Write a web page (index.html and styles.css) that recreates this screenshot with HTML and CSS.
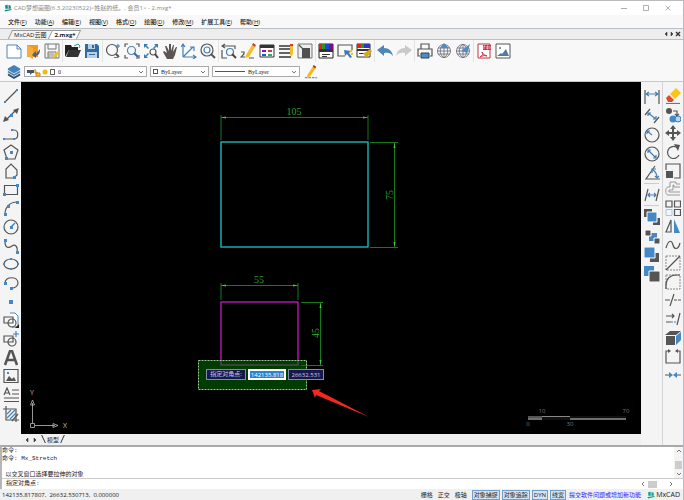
FILE: index.html
```html
<!doctype html>
<html lang="zh-CN">
<head>
	<meta charset="utf-8">
	<title>CAD梦想画图</title>
	<link rel="stylesheet" href="styles.css">
</head>
<body>
<div class="window">
	<header class="titlebar">
		<svg class="logo" viewBox="0 0 16 16"><path d="M2 3l5-2 1 8-5 1zM9 2l4 1 1 6-5 1zM1 12l14-2v2L2 15z" fill="#168b86"/></svg>
		<span class="title">CAD梦想画图(6.3.20230522)&lt;姓赵的纸。, 会员1&gt; - 2.mxg*</span>
		<button class="winbtn" aria-label="最小化"><svg viewBox="0 0 8 8"><path d="M1 4.500h6"/></svg></button>
		<button class="winbtn" aria-label="最大化"><svg viewBox="0 0 8 8"><path d="M1.500 1.500h5v5h-5z"/></svg></button>
		<button class="winbtn" aria-label="关闭"><svg viewBox="0 0 8 8"><path d="M1.500 1.500l5 5m0-5l-5 5"/></svg></button>
	</header>

	<nav class="menu">
		<button>文件(<u>F</u>)</button>
		<button>功能(<u>A</u>)</button>
		<button>编辑(<u>E</u>)</button>
		<button>视图(<u>V</u>)</button>
		<button>格式(<u>O</u>)</button>
		<button>绘图(<u>D</u>)</button>
		<button>修改(<u>M</u>)</button>
		<button>扩展工具(<u>E</u>)</button>
		<button>帮助(<u>H</u>)</button>
	</nav>

	<div class="tabs">
		<button class="tab">MxCAD云图</button>
		<button class="tab active">2.mxg*</button>
		<div class="tabnav">
			<button aria-label="上一个"><svg viewBox="0 0 6 6"><path d="M4 1L2 3l2 2z"/></svg></button>
			<button aria-label="下一个"><svg viewBox="0 0 6 6"><path d="M2 1l2 2-2 2z"/></svg></button>
			<button aria-label="关闭标签"><svg viewBox="0 0 6 6"><path d="M1 1l4 4m0-4L1 5" stroke-width="1.400"/></svg></button>
		</div>
	</div>

	<div class="toolbar">
		<div class="group">
			<button aria-label="新建"><svg viewBox="0 0 16 16"><path d="M1 2h10l4 4v9H1zM11 2v4h4" fill="#fff" stroke="#5585b5"/></svg></button>
			<button aria-label="打开云图"><svg viewBox="0 0 16 16"><path d="M2 2h11v12H2z" fill="#ef9a27"/><path d="M2 2l6 3v11l-6-3z" fill="#f7ad3b"/><path d="M15 6l-4 5V8L7 12l4 3v-2c3-1 4-3 4-7z" fill="#535c80"/></svg></button>
			<button aria-label="保存到云"><svg viewBox="0 0 16 16"><path d="M1 1h14v14H1zM4 1v5h8V1M4 15V9h8v6" fill="#f4f4f4" stroke="#777"/><path d="M4 11h6M4 13h5" stroke="#888"/><path d="M8 13l6-5 2 2-6 5z" fill="#efc131"/></svg></button>
		</div>
		<div class="group">
			<button aria-label="打开"><svg viewBox="0 0 16 16"><path d="M0 14V2h6l1 2h6v3H4z" fill="#222"/><path d="M4 7h12l-3 7H1z" fill="#333"/><path d="M9 3l4-2 2 2-1 2" fill="none" stroke="#388f6d"/></svg></button>
			<button aria-label="保存"><svg viewBox="0 0 16 16"><path d="M1 1h12l2 2v12H1z" fill="#346b9f"/><path d="M4 1h7v5H4zM3 9h10v6H3z" fill="#b7d1e7"/><path d="M8 2h2v3H8zM5 11h6v1H5z" fill="#346b9f"/></svg></button>
		</div>
		<div class="group">
			<button aria-label="实时缩放"><svg viewBox="0 0 16 16"><circle cx="7" cy="7" r="5.500" class="ln"/><path d="M11 11l3 3" stroke="#555" stroke-width="2"/><path d="M13 1v4M11 3h4M9 14.500h4" class="bl"/></svg></button>
			<button aria-label="范围缩放"><svg viewBox="0 0 16 16"><path d="M1 4V1h3M12 1h3v3M1 12v3h3M12 15h3v-3" class="ln"/><circle cx="7.500" cy="7.500" r="4" class="bl"/><path d="M10 10l4 4" stroke="#346b9f" stroke-width="2"/></svg></button>
			<button aria-label="全图"><svg viewBox="0 0 16 16"><path d="M1 5V1h4L3.500 2.500 6 5 5 6 2.500 3.500zM15 5V1h-4l1.500 1.500L10 5l1 1 2.500-2.500zM1 11v4h4l-1.500-1.500L6 11l-1-1-2.500 2.500z" fill="#3b7bb5"/><circle cx="10" cy="9" r="3" class="ln"/><path d="M12 11l3 4" stroke="#444" stroke-width="2"/></svg></button>
			<button aria-label="平移"><svg viewBox="0 0 16 16"><path d="M5 16L1 9l1-1 3 2L3 3h1.500L7 8V1h2v7l2-6h1l-1 7 3-5h1l-2 8-2 4z" fill="#5c5553"/></svg></button>
			<button aria-label="坐标系"><svg viewBox="0 0 16 16"><path d="M2 14V2M0 4l2-3 2 3M2 14h12M12 12l3 2-3 2M2 14L12 4M9 4h4v4" class="bl"/></svg></button>
			<button aria-label="缩放对象"><svg viewBox="0 0 16 16"><circle cx="7" cy="7" r="6" class="ln"/><circle cx="7" cy="7" r="3" class="bl"/><path d="M11 11l4 4" stroke="#555" stroke-width="2"/></svg></button>
		</div>
		<div class="group">
			<button aria-label="窗口缩放"><svg viewBox="0 0 16 16"><path d="M1 7v8h5M1 3h13v3M4 1L1 3l3 2" class="ln"/><circle cx="9" cy="9" r="3.500" class="bl"/><path d="M11 11l4 4" stroke="#444" stroke-width="2"/></svg></button>
			<button aria-label="编辑"><svg viewBox="0 0 16 16"><path d="M6 12L12 2l3 2-6 10-4 1z" fill="#f4be27"/><path d="M12 2l1-2 3 2-1 2z" fill="#c9422d"/><path d="M1 9h3v2l-3 3h4M9 15h5" class="ln"/></svg></button>
			<button aria-label="图层表"><svg viewBox="0 0 16 16"><path d="M1 2h14v12H1z" fill="#fff" stroke="#333"/><path d="M1 2h14v3H1z" fill="#333"/><path d="M3 7h4v2H3z" fill="#a0c"/><path d="M3 11h4v2H3z" fill="#06c"/><path d="M9 7h4v2H9z" fill="#d33"/><path d="M9 11h4v2H9z" fill="#2a7"/></svg></button>
			<button aria-label="线型"><svg viewBox="0 0 16 16"><path d="M1 3h11M1 6h11M1 10h11M1 14h12" stroke="#333" stroke-width="1.500"/><path d="M12 2h3v9l-2 3-1-3z" fill="#efbd30"/><path d="M12 1h3v2h-3z" fill="#d33"/></svg></button>
			<button aria-label="块"><svg viewBox="0 0 16 16"><path d="M1 1h14v14H1z" fill="#eee" stroke="#777"/><path d="M5 5h8v10H5z" fill="#505050"/><path d="M2 2l4 4" class="ln"/></svg></button>
		</div>
		<div class="group">
			<button aria-label="颜色"><svg viewBox="0 0 16 16"><path d="M1 1h14v14H1z" fill="#fff" stroke="#222"/><path d="M1 1h3v5H1z" fill="#d22"/><path d="M4 1h3v5H4z" fill="#292"/><path d="M7 1h4v5H7z" fill="#24d"/><path d="M11 1h4v5h-4z" fill="#718"/><path d="M1 6h14v3H1zM4 11h8v1H4zM4 13h5v1H4z" fill="#333"/></svg></button>
			<button aria-label="选择"><svg viewBox="0 0 16 16"><path d="M15 7V2H1v11h7" class="ln"/><path d="M7 7l7 1-2 2 3 4-2 1-3-4-2 2z" fill="#3b7bb5"/><path d="M13 9l2-2M14 11h2" stroke="#efbd30" stroke-width="2"/></svg></button>
			<button aria-label="格式刷"><svg viewBox="0 0 16 16"><path d="M1 1h13v13H1z" fill="#fff" stroke="#333"/><path d="M1 1h4v4H1z" fill="#d22"/><path d="M5 1h3v4H5z" fill="#292"/><path d="M8 1h6v4H8z" fill="#33c"/><path d="M1 6h13v2H1zM3 10h5v1H3z" fill="#333"/><path d="M7 10l3-1 4-3 2 2-3 4-3 3z" fill="#d7a71d"/></svg></button>
		</div>
		<div class="group">
			<button aria-label="撤销"><svg viewBox="0 0 16 16"><path d="M0 7l7-5v3c5 0 8 3 9 8-2-3-5-4-9-3v3z" fill="#4d86b7"/></svg></button>
			<button aria-label="重做"><svg viewBox="0 0 16 16"><path d="M16 7L9 2v3c-5 0-8 3-9 8 2-3 5-4 9-3v3z" fill="#c9c9c9"/></svg></button>
		</div>
		<div class="group">
			<button aria-label="打印"><svg viewBox="0 0 16 16"><path d="M4 6V1h8v5M3 13H1V6h14v7h-2" class="ln"/><path d="M4 10h8v5H4z" fill="#4e8dc4" stroke="#345"/></svg></button>
			<button aria-label="发布"><svg viewBox="0 0 16 16"><circle cx="8" cy="8" r="6.500" class="thin"/><path d="M2 5h12M1 8h14M2 11h12M8 1v14M8 1c-5 4-5 10 0 14M8 1c5 4 5 10 0 14" class="thin"/><path d="M4 5l4-5 5 5z" fill="#4e8dc4"/></svg></button>
			<button aria-label="网页"><svg viewBox="0 0 16 16"><circle cx="8" cy="8" r="6.500" class="thin"/><path d="M2 5h12M1 8h14M2 11h12M8 1v14M8 1c-5 4-5 10 0 14M8 1c5 4 5 10 0 14" class="thin"/><path d="M6 8l9-7-3 10-2-2z" fill="#4e8dc4"/></svg></button>
		</div>
		<div class="group">
			<button aria-label="输出PDF"><svg viewBox="0 0 16 16"><path d="M2 1h12v14H2z" fill="#fff" stroke="#bf3445"/><path d="M7 2h8v5H7z" fill="#d32e45"/><path d="M8 3v3m0-3h1v1M11 3v3h1V3zM14 3v3" stroke="#fff" stroke-width=".6" fill="none"/><path d="M4 14c3-2 3-3 2-5 1 3 3 3 5 4-3-1-5 0-7 1z" stroke="#c9314b" fill="none"/></svg></button>
			<button aria-label="输出图片"><svg viewBox="0 0 16 16"><path d="M1 1h14v14H1z" fill="#fff" stroke="#555"/><path d="M2 13l4-3 1 1 4-5 3 7z" fill="#4c7ca6"/><circle cx="5" cy="5" r="1" fill="#4c7ca6"/></svg></button>
		</div>
	</div>

	<div class="props">
		<button class="layers" aria-label="图层"><svg viewBox="0 0 16 16"><path d="M1 10l7-3 7 3v2l-7 4-7-4z" fill="#34536d"/><path d="M1 7l7-3 7 3v2l-7 4-7-4z" fill="#4b80ae"/><path d="M1 4l7-4 7 4v2l-7 4-7-4z" fill="#4383b8"/><path d="M1 6l7 4 7-4M1 9l7 4 7-4" fill="none" stroke="#dce9f4"/></svg></button>
		<div class="combo combo-layer">
			<svg class="state" viewBox="0 0 28 10"><path d="M0 3h7v3H5L3 8V6H0z" fill="#456"/><path d="M8 2v4h3M9 6h4v3H9z" stroke="#c88a16" fill="#f3c133"/><circle cx="18" cy="5" r="2.500" fill="#f5b812"/><path d="M23.500 2.500h4v5h-4z" fill="#fff" stroke="#333" stroke-width=".8"/></svg>
			<select aria-label="当前图层"><option>0</option></select>
			<svg class="chev" viewBox="0 0 6 6"><path d="M1 2l2 2 2-2"/></svg>
		</div>
		<div class="combo combo-color">
			<span class="swatch"></span>
			<select aria-label="颜色"><option>ByLayer</option></select>
			<svg class="chev" viewBox="0 0 6 6"><path d="M1 2l2 2 2-2"/></svg>
		</div>
		<div class="combo combo-line">
			<span class="linesample"></span>
			<select aria-label="线型"><option>ByLayer</option></select>
			<svg class="chev" viewBox="0 0 6 6"><path d="M1 2l2 2 2-2"/></svg>
		</div>
		<button class="pen" aria-label="线宽设置"><svg viewBox="0 0 16 16"><path d="M4 11l6-9 3 2-6 9-4 1z" fill="#f4b91f"/><path d="M10 2l1-2 3 2-1 2z" fill="#b12c28"/><path d="M1 14.500h14" stroke="#3867b5" stroke-dasharray="3 1"/></svg></button>
	</div>

	<main class="work">
		<div class="side draw">
			<button aria-label="直线"><svg viewBox="0 0 16 16"><path d="M2 14L14 2" class="ln"/><path d="M1 13h2v2H1zM13 1h2v2h-2z" class="dot"/></svg></button>
			<button aria-label="构造线"><svg viewBox="0 0 16 16"><path d="M3 13L13 3" class="ln"/><path d="M0 15l2-6 4 4zM16 1l-6 2 4 4z" fill="#555"/><path d="M7 7h3v3H7z" class="dot"/></svg></button>
			<button aria-label="多段线"><svg viewBox="0 0 16 16"><path d="M1 13h10c5 0 5-9 0-9H9" class="ln"/><path d="M0 12h2v2H0zM8 3h2v2H8zM10 12h2v2h-2z" class="dot"/></svg></button>
			<button aria-label="正多边形"><svg viewBox="0 0 16 16"><path d="M8 1l7 5-3 9H4L1 6z" class="ln"/><path d="M7 7h3v3H7zM2 13h3v3H2z" class="dot"/></svg></button>
			<button aria-label="多边形"><svg viewBox="0 0 16 16"><path d="M3 15V6l5-5 6 6v5l-3 3z" class="ln"/><path d="M10 13h3v3h-3z" class="dot"/></svg></button>
			<button aria-label="矩形"><svg viewBox="0 0 16 16"><path d="M1.500 3.500h13v9h-13z" class="ln"/><path d="M0 11h3v3H0zM13 2h3v3h-3z" class="dot"/></svg></button>
			<button aria-label="圆弧"><svg viewBox="0 0 16 16"><path d="M2 14C2 7 7 2 14 2" class="ln"/><path d="M1 13h3v3H1zM4 5h3v3H4zM13 1h3v3h-3z" class="dot"/></svg></button>
			<button aria-label="圆"><svg viewBox="0 0 16 16"><circle cx="8" cy="8" r="7" class="ln"/><path d="M8 8l4-4" class="bl"/><path d="M7 7h3v3H7z" class="dot"/></svg></button>
			<button aria-label="样条曲线"><svg viewBox="0 0 16 16"><path d="M2 3c0 8 4 7 7 5s6 0 5 6" class="ln"/><path d="M1 1h3v3H1zM13 13h3v3h-3z" class="dot"/></svg></button>
			<button aria-label="椭圆"><svg viewBox="0 0 16 16"><ellipse cx="8" cy="8" rx="7" ry="5" class="ln"/><path d="M0 7h2v2H0zM14 7h2v2h-2zM7 2h2v2H7zM7 12h2v2H7z" class="dot"/></svg></button>
			<button aria-label="椭圆弧"><svg viewBox="0 0 16 16"><path d="M2 8C2 1 15 1 15 8c0 3-3 5-6 5" class="ln"/><path d="M1 7h3v3H1zM7 12h3v3H7z" class="dot"/></svg></button>
			<button aria-label="点"><svg viewBox="0 0 16 16"><path d="M6 6h4v4H6z" class="dot"/></svg></button>
			<button aria-label="插入块"><svg viewBox="0 0 16 16"><path d="M7 1h5l3 3v11H9" fill="#fff" stroke="#4b8cc2"/><path d="M1 5h9v6H1z" class="ln"/><circle cx="9" cy="11" r="4" class="ln"/><path d="M16 16v-4l-4 4z" fill="#222"/></svg></button>
			<button aria-label="创建块"><svg viewBox="0 0 16 16"><path d="M1 5h9v6H1z" class="ln"/><circle cx="9" cy="11" r="4" class="ln"/><path d="M13 0v6M10 3h6" class="bl"/></svg></button>
			<button aria-label="文字"><svg viewBox="0 0 16 16"><path d="M2 15L7 1h2l5 14M4 10h8" fill="none" stroke="#555" stroke-width="2.500"/></svg></button>
			<button aria-label="图像"><svg viewBox="0 0 16 16"><path d="M1 1.500h14v13H1z" class="ln"/><path d="M3 13l3-5 3 3 2-2 2 4z" fill="#555"/><path d="M4 4h2v2H4z" class="dot"/></svg></button>
			<button aria-label="多行文字"><svg viewBox="0 0 16 16"><path d="M1 8l3-7 3 7M2 6h4M9 3h7M9 7h7M1 11h15M1 14.500h15" class="ln"/></svg></button>
			<button aria-label="填充"><svg viewBox="0 0 16 16"><path d="M3 0v14h13M0 3h13v13" class="ln"/><path d="M4 8l4-4M4 12l8-8M7 13l6-6" class="bl"/><path d="M9 15l6-7" class="ln"/></svg></button>
		</div>

		<div class="center">
			<div class="canvas">
				<svg class="drawing" width="620" height="352" viewBox="0 0 620 352">
					<rect x="200" y="60" width="147" height="105" class="cyan"/>
					<g class="dim">
						<path d="M200 33v25M347 33v25M200 35.500h147M349 60.500h28M349 165.500h28M373.500 61v104"/>
						<path class="tip" d="M200 35.500l5-1v2zM347 35.500l-5-1v2zM373.500 61l-1 5h2zM373.500 165l-1-5h2z"/>
						<text x="273" y="33">105</text>
						<text transform="translate(372 113) rotate(-90)">75</text>
					</g>
					<rect x="200" y="220" width="77" height="63" class="magenta"/>
					<g class="dim">
						<path d="M200 201v17M277 201v17M200 203.500h77M280 220.500h22M280 283.500h22M299.500 221v62"/>
						<path class="tip" d="M200 203.500l5-1v2zM277 203.500l-5-1v2zM299.500 221l-1 5h2zM299.500 283l-1-5h2z"/>
						<text x="238" y="201">55</text>
						<text transform="translate(298 251) rotate(-90)">45</text>
					</g>
					<rect x="177.500" y="278.500" width="108" height="29" class="pick"/>
					<path d="M291 308l9-1-2 2 50 26-53-22-1 3z" fill="#f3291d"/>
				</svg>

				<div class="dyn">
					<label for="px">指定对角点:</label>
					<input id="px" class="current" value="142135.818">
					<input aria-label="Y坐标" value="26632.531">
				</div>

				<svg class="axes" width="44" height="50" viewBox="0 0 44 50">
					<path d="M6.500 40V20M9 42.500h20M4.500 40.500h4v4h-4zM4.500 22l2-5 2 5zM27 40.500l5 2-5 2z"/>
					<text x="4" y="12">Y</text>
					<text x="37" y="45">X</text>
				</svg>
				<svg class="scale" width="106" height="20" viewBox="0 0 106 20">
					<path d="M4 8h98v4H4z" fill="#555"/>
					<path d="M18 8h28v4H18zM46 8h56v2H46z" fill="#111"/>
					<path d="M18 8.500h28M4 11h14M46 11h56" stroke="#888"/>
					<text x="18" y="5">10</text><text x="102" y="5">70</text>
					<text x="4" y="18">0</text><text x="46" y="18">30</text>
				</svg>
			</div>
			<div class="sheets">
				<button aria-label="前一页"><svg viewBox="0 0 6 6"><path d="M4 1L2 3l2 2z"/></svg></button>
				<button aria-label="后一页"><svg viewBox="0 0 6 6"><path d="M2 1l2 2-2 2z"/></svg></button>
				<button class="sheet">模型</button>
			</div>
		</div>

		<div class="side dims">
			<button aria-label="线性标注"><svg viewBox="0 0 16 16"><path d="M1 1v14M15 1v14" class="ln"/><path d="M2 5h12M5 3L2 5l3 2M11 3l3 2-3 2" class="bl"/></svg></button>
			<button aria-label="对齐标注"><svg viewBox="0 0 16 16"><path d="M1 7l5-6M10 15l5-6" class="ln"/><path d="M4 5l8 6M4 8V5h3M9 11h3V8" class="bl"/></svg></button>
			<button aria-label="半径标注"><svg viewBox="0 0 16 16"><circle cx="8" cy="8" r="7" class="ln"/><path d="M8 8L3 4M3 7V4h3" class="bl"/></svg></button>
			<button aria-label="直径标注"><svg viewBox="0 0 16 16"><circle cx="8" cy="8" r="7" class="ln"/><path d="M4 4l8 8M4 7V4h3M9 12h3V9" class="bl"/></svg></button>
			<button aria-label="角度标注"><svg viewBox="0 0 16 16"><path d="M11 1L2 14h14" class="ln"/><path d="M9 5c3 2 4 4 4 8M8 8V4h4M11 11l2 2 2-2" class="bl"/></svg></button>
			<hr>
			<button aria-label="倾斜标注"><svg viewBox="0 0 16 16"><path d="M1 14L4 2M12 14l3-12" class="ln"/><path d="M4 8h8M6 6L4 8l2 2M10 6l2 2-2 2" class="bl"/></svg></button>
			<hr>
			<button aria-label="置前"><svg viewBox="0 0 16 16"><path d="M0 0h8v8H0zM9 9h7v7H9z" fill="#555"/><path d="M3 3h10v10H3z" class="dot" stroke="#fff"/></svg></button>
			<button aria-label="置后"><svg viewBox="0 0 16 16"><path d="M5 5h8v8H5z" class="dot"/><path d="M1 2h6v6H1zM10 10h6v6h-6z" fill="#555" stroke="#fff"/></svg></button>
			<button aria-label="置顶"><svg viewBox="0 0 16 16"><path d="M6 6h9v9H6z" fill="#555"/><path d="M0 0h11v11H0z" class="dot" stroke="#fff"/></svg></button>
			<button aria-label="置底"><svg viewBox="0 0 16 16"><path d="M0 0h10v10H0z" class="dot"/><path d="M5 5h11v11H5z" fill="#555" stroke="#fff"/></svg></button>
		</div>

		<div class="side modify">
			<button aria-label="删除"><svg viewBox="0 0 16 16"><path d="M5 6l6-6 5 5-6 6z" fill="#f8c617"/><path d="M1 10l3-3 5 5-2 2H3z" fill="#dc4c28"/><path d="M1 15.500h14" class="bl"/></svg></button>
			<button aria-label="复制"><svg viewBox="0 0 16 16"><circle cx="4" cy="4" r="3" fill="#555"/><path d="M8 4h4v4M10 7l2 2 2-2" class="ln"/><circle cx="8" cy="12" r="3.500" class="dot"/><circle cx="13" cy="12" r="3" fill="#b7d5eb" stroke="#3b7bb5"/></svg></button>
			<button aria-label="移动"><svg viewBox="0 0 16 16"><path d="M8 0l3 4H9v3h3V5l4 3-4 3V9H9v3h2l-3 4-3-4h2V9H4v2L0 8l4-3v2h3V4H5z" fill="#555"/></svg></button>
			<button aria-label="旋转"><svg viewBox="0 0 16 16"><path d="M11 3a6 6 0 1 0 3 8" class="ln"/><path d="M9 0l6 1-2 6z" fill="#555"/></svg></button>
			<button aria-label="缩放"><svg viewBox="0 0 16 16"><path d="M1 7V1h14v14H9" class="ln"/><path d="M1 8h7v7H1z" fill="#555"/></svg></button>
			<button aria-label="偏移"><svg viewBox="0 0 16 16"><path d="M15 3h-4V1H5v5H3c-3 0-3 8 0 8h12M15 6H9V4H8v5H4v2h11" fill="none" stroke="#999"/></svg></button>
			<button aria-label="阵列"><svg viewBox="0 0 16 16"><path d="M1 1h6v6H1zM9.500 1h6v6h-6zM9.500 9.500h6v6h-6z" class="ln"/><path d="M1 9.500h6v6H1z" fill="#eef7fd" stroke="#9ec8e6"/></svg></button>
			<button aria-label="镜像"><svg viewBox="0 0 16 16"><path d="M6 2v12H1z" class="ln"/><path d="M9 1v14h6z" class="dot"/></svg></button>
			<button aria-label="拟合"><svg viewBox="0 0 16 16"><path d="M1 11C4 1 7 4 8 8s5 6 7-2" class="ln"/></svg></button>
			<button aria-label="倒角"><svg viewBox="0 0 16 16"><path d="M1 1h14v14H1z" fill="none" stroke="#888" stroke-dasharray="2 1"/><path d="M1 15L15 1" class="ln"/></svg></button>
			<button aria-label="圆角"><svg viewBox="0 0 16 16"><path d="M1 1h14v14H1z" fill="none" stroke="#888" stroke-dasharray="2 1"/><path d="M1 15V11C1 5 5 1 11 1h4" class="ln"/></svg></button>
			<button aria-label="修剪"><svg viewBox="0 0 16 16"><path d="M5 14L9 2M0 8h5" class="ln"/><path d="M9 8h7" class="ln" stroke-dasharray="3 1"/></svg></button>
			<button aria-label="延伸"><svg viewBox="0 0 16 16"><path d="M12 14l3-12M1 5h8M7 3l2 2-2 2M1 11h5" class="ln"/><path d="M6 11h6" class="bl" stroke-dasharray="2 1"/></svg></button>
			<button aria-label="三维"><svg viewBox="0 0 16 16"><path d="M5 1h11l-5 4H0zM1 6h9v9H1z" fill="#555"/><path d="M11 6l5-4v8l-5 5z" class="dot"/></svg></button>
			<button aria-label="打断"><svg viewBox="0 0 16 16"><path d="M5 3H1v12h14V3h-4" class="ln"/><path d="M3 1l3 2-3 2zM13 1l-3 2 3 2z" fill="#555"/></svg></button>
			<button aria-label="合并"><svg viewBox="0 0 16 16"><path d="M0 8h5M11 8h5" class="ln"/><path d="M4 5l4 3-4 3zM12 5L8 8l4 3z" class="dot"/></svg></button>
		</div>
	</main>

	<section class="command">
		<div class="history">
			<pre>命令:
命令: Mx_Stretch

 以交叉窗口选择要拉伸的对象</pre>
			<div class="vscroll">
				<svg viewBox="0 0 6 6"><path d="M1 4l2-2 2 2"/></svg>
				<span></span>
				<svg viewBox="0 0 6 6"><path d="M1 2l2 2 2-2"/></svg>
			</div>
		</div>
		<div class="entry">
			<label for="cmd">指定对角点:</label>
			<input id="cmd">
			<div class="hscroll">
				<svg viewBox="0 0 6 6"><path d="M4 1L2 3l2 2"/></svg>
				<span></span>
				<svg viewBox="0 0 6 6"><path d="M2 1l2 2-2 2"/></svg>
			</div>
		</div>
	</section>

	<footer class="status">
		<span class="coords">142135.817807,&nbsp; 26632.530713,&nbsp; 0.000000</span>
		<button>栅格</button>
		<button>正交</button>
		<button>极轴</button>
		<button class="on">对象捕捉</button>
		<button class="on">对象追踪</button>
		<button class="on">DYN</button>
		<button class="on">线宽</button>
		<a href="#">提交软件问题或增加新功能</a>
		<span class="brand"><svg class="logo" viewBox="0 0 16 16"><path d="M2 3l5-2 1 8-5 1zM9 2l4 1 1 6-5 1zM1 12l14-2v2L2 15z" fill="#10a596"/></svg>MxCAD</span>
	</footer>
</div>
</body>
</html>
```

FILE: styles.css
```css
* {
	box-sizing: border-box;
}

body {
	margin: 0;
	font: 6px/8px "Open Sans", "Noto Sans CJK SC", sans-serif;
	color: #222;
}

button, input, select {
	margin: 0;
	padding: 0;
	border: 0;
	border-radius: 0;
	background: none;
	color: inherit;
	font: inherit;
}

svg {
	display: block;
	flex: none;
}

.window {
	display: flex;
	flex-direction: column;
	height: 100vh;
	border-top: 1px solid #bbb;
	border-right: 1px solid #b4bdc6;
	background: #f8f8f8;
}

/* icon strokes */
.ln {
	fill: none;
	stroke: #555;
	stroke-width: 1.2;
}

.thin {
	fill: none;
	stroke: #667;
	stroke-width: .8;
}

.bl {
	fill: none;
	stroke: #4580b5;
	stroke-width: 1.2;
}

.dot {
	fill: #4489c5;
}

.logo {
	width: 8px;
	height: 8px;
}

/* title and menu */
.titlebar {
	display: flex;
	align-items: center;
	height: 14px;
	padding: 0 4px;
	background: #fff;
	color: #888;
}

.title {
	flex: 1;
	margin-left: 2px;
}

.winbtn {
	width: 22px;
}

.winbtn svg {
	width: 8px;
	height: 8px;
	margin: 0 auto;
	fill: none;
	stroke: #999;
	stroke-width: .8;
}

.menu {
	display: flex;
	gap: 8px;
	height: 13px;
	padding-left: 8px;
	font-weight: 500;
}

/* document tabs */
.tabs {
	display: flex;
	align-items: stretch;
	height: 12px;
	padding-left: 11px;
	border-top: 1px solid #b9c0c6;
	border-bottom: 1px solid #b9c0c6;
	background: #ededed;
}

.tab {
	position: relative;
	z-index: 0;
	margin-top: 1px;
	padding: 0 3px;
}

.tab::before {
	content: "";
	position: absolute;
	z-index: -1;
	inset: 0 -1px 0 -1px;
	border: 1px solid #999;
	border-width: 1px 0 0 1px;
	background: #f3f3f3;
	transform: skewX(-25deg);
}

.tab.active {
	margin-left: 2px;
	font-weight: bold;
}

.tab.active::before {
	border-right-width: 1px;
	background: #fff;
}

.tabnav {
	display: flex;
	align-items: center;
	margin-left: auto;
	padding-right: 2px;
}

.tabnav svg, .sheets svg {
	width: 6px;
	height: 6px;
	fill: #333;
	stroke: #333;
	stroke-width: .5;
}

/* toolbars */
.toolbar {
	display: flex;
	gap: 2px;
	height: 22px;
	padding-left: 4px;
}

.group {
	display: flex;
}

.group + .group {
	box-shadow: -1px 0 #e4e4e4;
}

.group button {
	width: 19px;
}

.group svg, .side svg {
	width: 16px;
	height: 16px;
	margin: 0 auto;
}

.props {
	display: flex;
	align-items: center;
	height: 20px;
	padding-left: 7px;
	border-bottom: 1px solid #c8c8c8;
}

.layers svg, .pen svg {
	width: 14px;
	height: 14px;
}

.combo {
	display: flex;
	align-items: center;
	gap: 3px;
	height: 11px;
	margin-left: 3px;
	padding: 0 2px;
	border: 1px solid #aaa;
	background: #fff;
	font-family: "Liberation Serif", serif;
}

.combo select {
	flex: 1;
	min-width: 0;
	appearance: none;
}

.combo-layer {
	width: 123px;
}

.combo-color {
	width: 59px;
}

.combo-line {
	width: 88px;
}

.pen {
	margin-left: 4px;
}

.state {
	width: 28px;
	height: 10px;
}

.swatch {
	width: 5px;
	height: 5px;
	border: 1px solid #555;
}

.linesample {
	width: 30px;
	border-top: 1px solid #555;
}

.chev, .vscroll svg, .hscroll svg {
	width: 6px;
	height: 6px;
	fill: none;
	stroke: #555;
	stroke-width: .8;
}

/* workspace */
.work {
	display: flex;
	flex: 1;
	min-height: 0;
}

.side {
	display: flex;
	flex-direction: column;
	width: 21px;
	background: #f4f4f4;
}

.draw {
	padding: 5px 0 22px;
}

.draw button, .modify button {
	flex: 1;
	min-height: 0;
}

.dims {
	padding-top: 5px;
}

.dims button {
	height: 19px;
}

.side hr {
	width: 15px;
	margin: 1px auto;
	border: 0;
	border-top: 1px solid #ccc;
}

.modify {
	padding: 5px 0 61px;
	border-left: 1px solid #d4d4d4;
}

.center {
	display: flex;
	flex: 1;
	flex-direction: column;
	min-width: 0;
}

.canvas {
	position: relative;
	flex: 1;
	overflow: hidden;
	background: #000;
}

.drawing {
	position: absolute;
	top: 0;
	left: 0;
}

.cyan, .magenta {
	fill: none;
	stroke: #19b9bd;
	stroke-width: 1.4;
}

.magenta {
	stroke: #b517b5;
}

.dim path {
	fill: none;
	stroke: #167a16;
}

.dim .tip {
	fill: #4c4;
	stroke: none;
}

.dim text {
	fill: #2b9d2b;
	font: 10px "Liberation Serif", serif;
	text-anchor: middle;
}

.pick {
	fill: rgba(0, 110, 0, .55);
	stroke: #9c9;
	stroke-dasharray: 2 1;
}

.dyn {
	position: absolute;
	top: 287px;
	left: 185px;
	display: flex;
	gap: 2px;
	color: #ccd;
}

.dyn label, .dyn input {
	width: 36px;
	height: 11px;
	border: 1px solid #88a;
	background: #181850;
	line-height: 9px;
	text-align: center;
}

.dyn label {
	width: 40px;
}

.dyn .current {
	width: 38px;
	border: 2px solid #fff;
	background: #2a82d4;
	color: #fff;
	line-height: 7px;
}

.axes {
	position: absolute;
	bottom: 1px;
	left: 5px;
	fill: none;
	stroke: #bbb;
	stroke-width: .8;
}

.axes text {
	fill: #bbb;
	stroke: none;
	font-size: 7px;
}

.scale {
	position: absolute;
	right: 11px;
	bottom: 6px;
}

.scale text {
	fill: #777;
	font-size: 6px;
	text-anchor: middle;
}

.sheets {
	display: flex;
	height: 11px;
	padding-left: 2px;
	background: #f0f0f0;
}

.sheets > button {
	padding: 0 1px;
}

.sheets .sheet {
	position: relative;
	margin-left: 3px;
	padding: 0 5px;
}

.sheet::before, .sheet::after {
	content: "";
	position: absolute;
	top: 1px;
	bottom: 2px;
	left: 1px;
	border-left: 1px solid #333;
	transform: skewX(25deg);
}

.sheet::after {
	right: 1px;
	left: auto;
	transform: skewX(-25deg);
}

/* command line */
.command {
	border-top: 2px solid #a9a9a9;
	border-left: 2px solid #b5b5b5;
	background: #fff;
	font-family: "Liberation Mono", "Noto Sans CJK SC", monospace;
}

.history {
	display: flex;
	justify-content: space-between;
	height: 32px;
	overflow: hidden;
	border-bottom: 1px solid #ccc;
}

.history pre {
	margin: 0;
	font: inherit;
}

.vscroll {
	display: flex;
	flex-direction: column;
	align-items: center;
	width: 9px;
	padding: 1px 0;
	background: #f4f4f4;
}

.vscroll span {
	width: 7px;
	height: 8px;
	margin: auto 0 2px;
	background: #ccc;
}

.entry {
	display: flex;
	align-items: center;
	height: 10px;
	padding-left: 4px;
}

.entry input {
	flex: 1;
	min-width: 0;
	height: 8px;
}

.hscroll {
	display: flex;
	align-items: center;
	width: 43px;
	padding-right: 9px;
}

.hscroll span {
	width: 9px;
	height: 7px;
	margin: 0 auto 0 2px;
	background: #ccc;
}

/* status bar */
.status {
	display: flex;
	align-items: center;
	height: 11px;
	padding: 0 3px 0 2px;
	background: #f0f0f0;
}

.coords {
	margin-right: auto;
}

.status button {
	height: 10px;
	margin-right: 5px;
	line-height: 8px;
}

.status .on {
	margin-right: 2px;
	padding: 0 1px;
	border: 1px solid #6f9fca;
	background: #cfe4f7;
}

.status a {
	margin-left: 1px;
	color: #22f;
	text-decoration: none;
}

.brand {
	display: flex;
	align-items: center;
	gap: 1px;
	margin-left: 6px;
	font-size: 7px;
}
```
